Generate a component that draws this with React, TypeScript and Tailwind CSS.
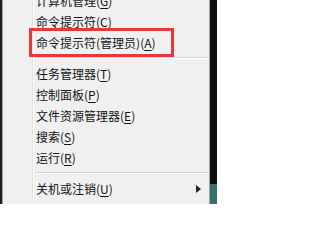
import { Fragment } from "react";

type Item = { label: string; key: string; sub?: boolean } | "sep";

const items: Item[] = [
  { label: "计算机管理", key: "G" },
  { label: "命令提示符", key: "C" },
  { label: "命令提示符(管理员)", key: "A" },
  "sep",
  { label: "任务管理器", key: "T" },
  { label: "控制面板", key: "P" },
  { label: "文件资源管理器", key: "E" },
  { label: "搜索", key: "S" },
  { label: "运行", key: "R" },
  "sep",
  { label: "关机或注销", key: "U", sub: true },
];

const font = { fontFamily: '"Noto Sans CJK SC", "Noto Sans", sans-serif' };

export default function App() {
  return (
    <div className="flex h-[204px] w-[217px] overflow-hidden bg-[#1c1c1c]">
      <div className="w-[2px] shrink-0 bg-[#1e1e1e]" />

      {/* menu */}
      <div className="relative flex w-[208px] shrink-0 border-x border-[#a3a3a3] bg-[#f0f0f0]">
        {/* icon gutter */}
        <div className="w-[30px] shrink-0 border-r border-[#e2e2e2]" />
        <div className="w-[1px] shrink-0 bg-white" />

        <div className="-mt-[10px] flex flex-1 flex-col text-[12px] text-[#141414]" style={font}>
          {items.map((it, i) =>
            it === "sep" ? (
              <div key={i} className="flex h-[10px] flex-col justify-center pl-[1px] pr-[1px]">
                <div className="h-[1px] bg-[#d8d8d8]" />
                <div className="h-[1px] bg-white" />
              </div>
            ) : (
              <div key={i} className="flex h-[21px] shrink-0 items-center pl-[2px] pr-[7px] leading-none">
                <span className="whitespace-nowrap">
                  {it.label}(<u className="underline-offset-[2px]">{it.key}</u>)
                </span>
                {it.sub && (
                  <Fragment>
                    <span className="flex-1" />
                    <svg width="5" height="8" viewBox="0 0 5 8" className="mr-[1px]">
                      <path d="M0 0 L5 4 L0 8 Z" fill="#222" />
                    </svg>
                  </Fragment>
                )}
              </div>
            ),
          )}
        </div>

        {/* red highlight annotation */}
        <div className="pointer-events-none absolute left-[26px] top-[28px] h-[29px] w-[145px] border-[3px] border-[#e5393e]" />
      </div>

      <div className="flex w-[7px] shrink-0 flex-col">
        <div className="h-[184px] bg-[#0d0d0d]" />
        <div className="flex-1 bg-[#35716d]" />
      </div>
    </div>
  );
}
